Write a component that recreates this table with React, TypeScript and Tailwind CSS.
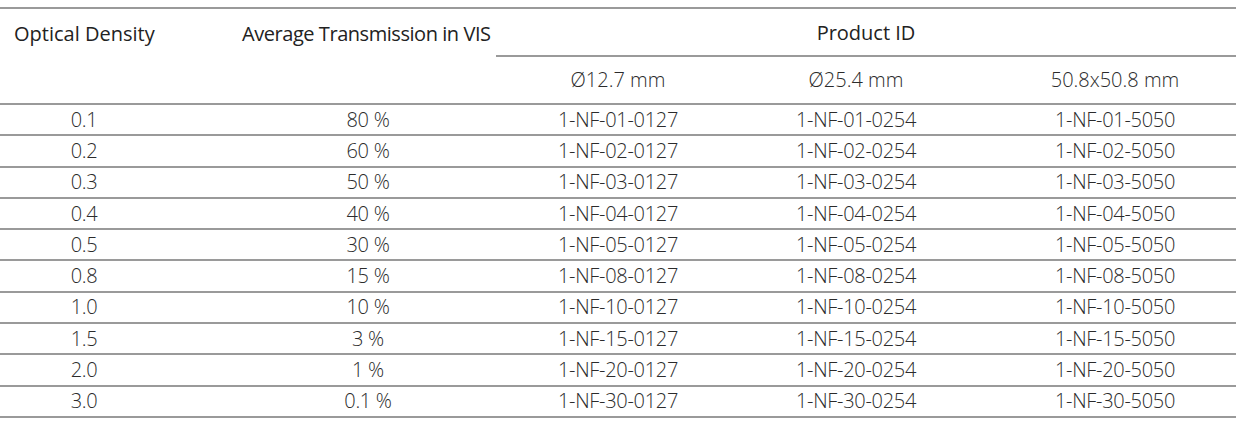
import React from 'react';

type Row = { od: string; t: string; code: string };

const rows: Row[] = [
  { od: '0.1', t: '80 %', code: '01' },
  { od: '0.2', t: '60 %', code: '02' },
  { od: '0.3', t: '50 %', code: '03' },
  { od: '0.4', t: '40 %', code: '04' },
  { od: '0.5', t: '30 %', code: '05' },
  { od: '0.8', t: '15 %', code: '08' },
  { od: '1.0', t: '10 %', code: '10' },
  { od: '1.5', t: '3 %', code: '15' },
  { od: '2.0', t: '1 %', code: '20' },
  { od: '3.0', t: '0.1 %', code: '30' },
];

const cols = 'grid grid-cols-[240px_256px_244px_232px_264px]';

export default function App() {
  return (
    <div className="bg-white w-[1238px] h-[424px] pt-[7px] text-[#2b2b2b] font-['Open_Sans',sans-serif] font-light text-[20px] leading-none">
      <div className="w-[1236px] border-t-2 border-[#9a9a9a]">
        {/* header */}
        <div className={cols}>
          <div className="row-span-2 h-[48px] flex items-center pl-[14px] pt-[2px] text-[#222] font-normal whitespace-nowrap">Optical Density</div>
          <div className="row-span-2 h-[48px] flex items-center pl-[2px] pt-[2px] text-[#222] font-normal whitespace-nowrap tracking-[-0.45px]">Average Transmission in VIS</div>
          <div className="col-span-3 h-[48px] flex items-center justify-center pt-[2px] border-b-2 border-[#9a9a9a] text-[#222] font-normal">Product ID</div>
          <div className="h-[46px] flex items-center justify-center">Ø12.7 mm</div>
          <div className="h-[46px] flex items-center justify-center">Ø25.4 mm</div>
          <div className="h-[46px] flex items-center justify-center pl-[22px]">50.8x50.8 mm</div>
        </div>
        {/* body */}
        <div className="border-t-2 border-[#9a9a9a] tracking-[-0.3px]">
          {rows.map((r) => (
            <div key={r.od} className={`${cols} h-[31.3px] items-center border-b-2 border-[#9a9a9a]`}>
              <div className="text-center pr-[72px]">{r.od}</div>
              <div className="text-center">{r.t}</div>
              <div className="text-center">1-NF-{r.code}-0127</div>
              <div className="text-center">1-NF-{r.code}-0254</div>
              <div className="text-center pl-[22px]">1-NF-{r.code}-5050</div>
            </div>
          ))}
        </div>
      </div>
    </div>
  );
}
